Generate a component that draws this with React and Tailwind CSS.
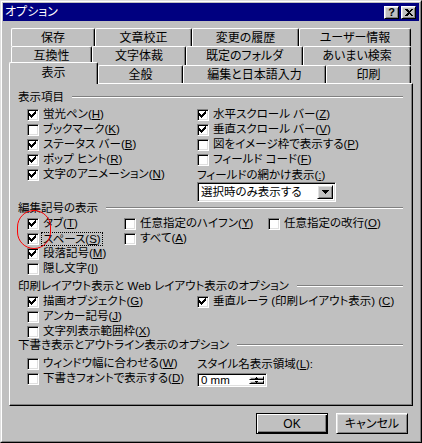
import React from "react";

const raised =
  "border border-t-white border-l-white border-r-black border-b-black shadow-[inset_1px_1px_0_#dfdfdf,inset_-1px_-1px_0_#808080]";
const sunken =
  "border border-t-[#808080] border-l-[#808080] border-r-white border-b-white shadow-[inset_1px_1px_0_#000,inset_-1px_-1px_0_#dfdfdf]";

// classic 7x7 check mark, one column at a time
const checkCols = [2, 3, 4, 3, 2, 1, 0];

function Box({ on }) {
  return (
    <div className={"w-[12px] h-[12px] shrink-0 bg-white flex items-start pl-[1px] pt-[1px] " + sunken}>
      {on && (
        <svg width="7" height="7" viewBox="0 0 7 7" shapeRendering="crispEdges">
          {checkCols.map((y, x) => (
            <rect key={x} x={x} y={y} width="1" height="3" fill="#000" />
          ))}
        </svg>
      )}
    </div>
  );
}

function Check({ on, children, focus }) {
  return (
    <div className="flex items-center h-[15px] whitespace-nowrap">
      <Box on={on} />
      {focus ? (
        <span className="ml-[2px] px-[1px] border border-dotted border-black leading-[12px]">{children}</span>
      ) : (
        <span className="ml-[4px] leading-[13px]">{children}</span>
      )}
    </div>
  );
}

function GroupLabel({ children, className }) {
  return (
    <div className={"flex items-center h-[12px] leading-[12px] whitespace-nowrap " + (className || "")}>
      <span>{children}</span>
      <div className="flex-1 ml-[8px] h-[2px] border-t border-t-[#808080] border-b border-b-white" />
    </div>
  );
}

function Tab({ w, children }) {
  return (
    <div
      className="h-full shrink-0 flex items-center justify-center rounded-t-[2px] border-t border-l border-r border-t-white border-l-white border-r-black shadow-[inset_-1px_0_0_#808080] bg-[#c0c0c0]"
      style={{ width: w }}
    >
      {children}
    </div>
  );
}

function TitleButton({ children }) {
  return (
    <div className={"w-[15px] h-[13px] bg-[#c0c0c0] flex items-center justify-center text-black font-bold text-[11px] leading-none " + raised}>
      {children}
    </div>
  );
}

function Btn({ children, def }) {
  return (
    <div
      className={
        "w-[72px] h-[21px] flex items-center justify-center " +
        (def
          ? "border border-black shadow-[inset_1px_1px_0_#fff,inset_-1px_-1px_0_#000,inset_-2px_-2px_0_#808080]"
          : raised)
      }
    >
      {children}
    </div>
  );
}

export default function App() {
  return (
    <div className="relative w-[422px] h-[443px] bg-[#c0c0c0] border border-t-[#dfdfdf] border-l-[#dfdfdf] border-r-black border-b-black font-['Liberation_Sans','Noto_Sans_CJK_JP',sans-serif] text-[11.5px] leading-[14px] text-black [font-feature-settings:'palt']">
      <div className="w-full h-full border border-t-white border-l-white border-r-[#808080] border-b-[#808080] p-px flex flex-col">
        {/* title bar */}
        <div className="h-[18px] bg-[#000080] flex items-center pl-[2px] pr-[3px] shrink-0">
          <span className="text-white text-[12px]">オプション</span>
          <div className="flex-1" />
          <div className="flex gap-[2px]">
            <TitleButton>?</TitleButton>
            <TitleButton>
              <svg width="8" height="7" viewBox="0 0 8 7" shapeRendering="crispEdges">
                <path d="M0 0h2l2 2 2-2h2L5 3.5 8 7H6L4 5 2 7H0l3-3.5z" fill="#000" />
              </svg>
            </TitleButton>
          </div>
        </div>

        <div className="px-[6px] mt-[7px] text-[12px]">
          {/* tab rows */}
          <div className="flex h-[18px] ml-[2px]">
            <Tab w={84}>保存</Tab>
            <Tab w={97}>文章校正</Tab>
            <Tab w={107}>変更の履歴</Tab>
            <Tab w={112}>ユーザー情報</Tab>
          </div>
          <div className="flex h-[16px] ml-[2px] items-start">
            <div className="flex h-[19px]">
              <Tab w={81}>互換性</Tab>
              <Tab w={94}>文字体裁</Tab>
              <Tab w={117}>既定のフォルダ</Tab>
              <Tab w={108}>あいまい検索</Tab>
            </div>
          </div>
          <div className="flex h-[21px] items-end">
            <div className="relative z-10 w-[89px] h-[22px] -mb-px bg-[#c0c0c0] flex items-center justify-center pb-[2px] rounded-t-[2px] border-t border-l border-r border-t-white border-l-white border-r-black shadow-[inset_-1px_0_0_#808080]">
              表示
            </div>
            <div className="flex h-[18px]">
              <Tab w={85}>全般</Tab>
              <Tab w={143}>編集と日本語入力</Tab>
              <Tab w={85}>印刷</Tab>
            </div>
          </div>

          {/* panel */}
          <div className="w-[404px] h-[323px] text-[11.5px] border border-t-white border-l-white border-r-black border-b-black shadow-[inset_-1px_-1px_0_#808080] pl-[8px] pr-[9px] pt-[7px]">
            <GroupLabel>表示項目</GroupLabel>
            <div className="flex mt-[4px] pl-[9px]">
              <div className="w-[170px] shrink-0">
                <Check on>蛍光ペン(<u>H</u>)</Check>
                <Check>ブックマーク(<u>K</u>)</Check>
                <Check on>ステータス バー(<u>B</u>)</Check>
                <Check on>ポップ ヒント(<u>R</u>)</Check>
                <Check on>文字のアニメーション(<u>N</u>)</Check>
              </div>
              <div>
                <Check on>水平スクロール バー(<u>Z</u>)</Check>
                <Check on>垂直スクロール バー(<u>V</u>)</Check>
                <Check>図をイメージ枠で表示する(<u>P</u>)</Check>
                <Check>フィールド コード(<u>F</u>)</Check>
                <div className="h-[15px] flex items-center whitespace-nowrap">
                  フィールドの網かけ表示(<u>:</u>)
                </div>
                <div className={"w-[139px] h-[20px] bg-white flex items-center p-[2px] " + sunken}>
                  <span className="flex-1 pl-[1px] whitespace-nowrap">選択時のみ表示する</span>
                  <div className={"w-[16px] h-full bg-[#c0c0c0] flex items-center justify-center " + raised}>
                    <svg width="7" height="4" viewBox="0 0 7 4" shapeRendering="crispEdges">
                      <path d="M0 0h7v1H0zM1 1h5v1H1zM2 2h3v1H2zM3 3h1v1H3z" fill="#000" />
                    </svg>
                  </div>
                </div>
              </div>
            </div>

            <GroupLabel>編集記号の表示</GroupLabel>
            <div className="flex mt-[2px] pl-[9px]">
              <div className="w-[97px] shrink-0">
                <Check on>タブ(<u>T</u>)</Check>
                <Check on focus>スペース(<u>S</u>)</Check>
                <Check on>段落記号(<u>M</u>)</Check>
                <Check>隠し文字(<u>I</u>)</Check>
              </div>
              <div className="w-[144px] shrink-0">
                <Check>任意指定のハイフン(<u>Y</u>)</Check>
                <Check>すべて(<u>A</u>)</Check>
              </div>
              <div>
                <Check>任意指定の改行(<u>O</u>)</Check>
              </div>
            </div>

            <GroupLabel className="mt-[4px]">印刷レイアウト表示と Web レイアウト表示のオプション</GroupLabel>
            <div className="flex mt-[2px] pl-[9px]">
              <div className="w-[170px] shrink-0">
                <Check on>描画オブジェクト(<u>G</u>)</Check>
                <Check>アンカー記号(<u>J</u>)</Check>
                <Check>文字列表示範囲枠(<u>X</u>)</Check>
              </div>
              <div>
                <Check on>垂直ルーラ (印刷レイアウト表示) (<u>C</u>)</Check>
              </div>
            </div>

            <GroupLabel>下書き表示とアウトライン表示のオプション</GroupLabel>
            <div className="flex mt-[5px] pl-[9px]">
              <div className="w-[170px] shrink-0">
                <Check>ウィンドウ幅に合わせる(<u>W</u>)</Check>
                <Check>下書きフォントで表示する(<u>D</u>)</Check>
              </div>
              <div>
                <div className="h-[15px] flex items-center whitespace-nowrap">スタイル名表示領域(<u>L</u>):</div>
                <div className={"mt-[2px] w-[70px] h-[14px] bg-white flex items-center p-[2px] " + sunken}>
                  <span className="flex-1 pl-[1px] leading-[10px]">0 mm</span>
                  <div className="w-[15px] h-full flex flex-col">
                    <div className={"flex-1 bg-[#c0c0c0] flex items-center justify-center " + raised}>
                      <svg width="3" height="2" viewBox="0 0 3 2" shapeRendering="crispEdges">
                        <path d="M1 0h1v1H1zM0 1h3v1H0z" fill="#000" />
                      </svg>
                    </div>
                    <div className={"flex-1 bg-[#c0c0c0] flex items-center justify-center " + raised}>
                      <svg width="3" height="2" viewBox="0 0 3 2" shapeRendering="crispEdges">
                        <path d="M0 0h3v1H0zM1 1h1v1H1z" fill="#000" />
                      </svg>
                    </div>
                  </div>
                </div>
              </div>
            </div>
          </div>

          {/* buttons */}
          <div className="flex justify-end gap-[8px] mt-[7px] mr-[5px]">
            <Btn def>OK</Btn>
            <Btn>キャンセル</Btn>
          </div>
        </div>
      </div>

      {/* red annotation circle */}
      <div className="absolute left-[16px] top-[209px] w-[34px] h-[39px] rounded-full border border-[#ff0000] pointer-events-none" />
    </div>
  );
}
